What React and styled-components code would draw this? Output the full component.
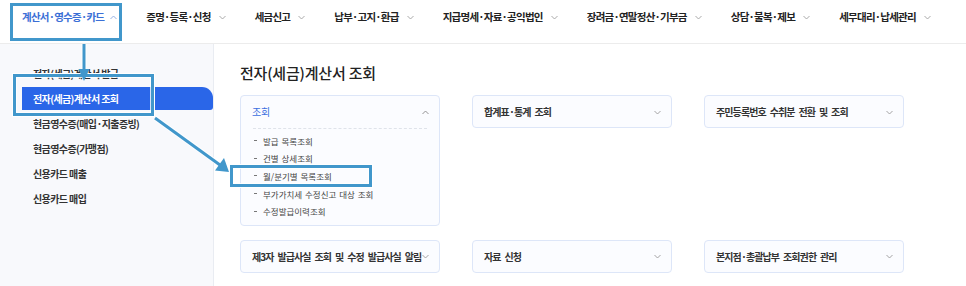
import React from 'react';
import styled, { createGlobalStyle } from 'styled-components';

const GlobalStyle = createGlobalStyle`
  html, body { margin: 0; padding: 0; background: #fff; }
  body {
    font-family: "Noto Sans CJK KR", "Noto Sans", sans-serif;
    color: #222;
  }
`;

const Page = styled.div`
  position: relative;
  width: 966px;
  height: 286px;
  overflow: hidden;
`;

const TopNav = styled.nav`
  display: flex;
  align-items: flex-start;
  box-sizing: border-box;
  height: 44px;
  padding: 10px 0 0 22px;
  gap: 29px;
  border-bottom: 1px solid #ececec;
`;

const NavItem = styled.div`
  display: flex;
  align-items: center;
  height: 14px;
  font-size: 10.5px;
  font-weight: 700;
  letter-spacing: -0.75px;
  line-height: 14px;
  white-space: nowrap;
  color: ${p => (p.$active ? '#3b6fd6' : '#222')};
`;

const Caret = styled.svg`
  flex-shrink: 0;
  margin-left: ${p => p.$gap ?? 8}px;
  margin-top: 1px;
`;

const Body = styled.div`
  display: flex;
  height: 242px;
`;

const Sidebar = styled.aside`
  width: 213px;
  flex-shrink: 0;
  background: #f8f9fc;
  border-right: 1px solid #e9ecf2;
  padding-top: 17px;
`;

const SideItem = styled.div`
  display: flex;
  align-items: center;
  box-sizing: border-box;
  height: ${p => (p.$active ? 23 : 25)}px;
  margin: ${p => (p.$active ? '1px 0 1px 22px' : '0')};
  padding-left: ${p => (p.$active ? 11 : 33)}px;
  font-size: 10px;
  font-weight: 700;
  letter-spacing: -0.6px;
  white-space: nowrap;
  color: ${p => (p.$active ? '#fff' : '#333')};
  background: ${p => (p.$active ? '#2a66e8' : 'transparent')};
  border-radius: ${p => (p.$active ? '0 11px 3px 0' : '0')};
`;

const Content = styled.main`
  flex: 1;
  padding: 19px 0 0 26px;
`;

const Title = styled.h1`
  margin: 0 0 12px;
  font-size: 15px;
  line-height: 20px;
  font-weight: 500;
  letter-spacing: -0.2px;
  color: #222;
`;

const CardGrid = styled.div`
  display: grid;
  grid-template-columns: repeat(3, 200px);
  column-gap: 32px;
  row-gap: 14px;
  align-items: start;
`;

const Card = styled.section`
  box-sizing: border-box;
  width: 200px;
  background: #fbfcff;
  border: 1px solid #dde6f8;
  border-radius: 4px;
`;

const CardHead = styled.div`
  display: flex;
  align-items: center;
  justify-content: space-between;
  height: 31px;
  padding: 0 10px 0 11px;
  font-size: 10px;
  font-weight: ${p => (p.$open ? 400 : 700)};
  letter-spacing: ${p => (p.$open ? '-0.3px' : '-0.9px')};
  word-spacing: ${p => (p.$open ? '0' : '2.5px')};
  white-space: nowrap;
  color: ${p => (p.$open ? '#3b6fe0' : '#333')};
`;

const Divider = styled.div`
  margin: 1px 12px 0 12px;
  border-top: 1px dashed #dfe3ea;
`;

const SubList = styled.ul`
  list-style: none;
  margin: 0;
  padding: 3px 0 5px 13px;
`;

const SubItem = styled.li`
  display: flex;
  align-items: center;
  height: 17.6px;
  font-size: 8.5px;
  word-spacing: 1px;
  color: #444;
  white-space: nowrap;

  &::before {
    content: '';
    width: 3px;
    height: 1px;
    margin-right: 6px;
    background: #777;
  }
`;

const Mark = styled.div`
  position: absolute;
  left: ${p => p.$x}px;
  top: ${p => p.$y}px;
  width: ${p => p.$w}px;
  height: ${p => p.$h}px;
  box-sizing: border-box;
  border: 3px solid #4197cb;
  box-shadow: 0 0 0 1px #fff, inset 0 0 0 1px rgba(255, 255, 255, 0.8);
  pointer-events: none;
`;

const Arrows = styled.svg`
  position: absolute;
  left: 0;
  top: 0;
  pointer-events: none;
`;

const Chevron = ({ up, color = '#9a9a9a', gap }) => (
  <Caret width="7" height="5" viewBox="0 0 7 5" $gap={gap}>
    <path
      d={up ? 'M0.5 4L3.5 1L6.5 4' : 'M0.5 1L3.5 4L6.5 1'}
      fill="none"
      stroke={color}
      strokeWidth="0.9"
    />
  </Caret>
);

const navs = [
  '계산서·영수증·카드',
  '증명·등록·신청',
  '세금신고',
  '납부·고지·환급',
  '지급명세·자료·공익법인',
  '장려금·연말정산·기부금',
  '상담·불복·제보',
  '세무대리·납세관리',
];

const sideItems = [
  '전자(세금)계산서 발급',
  '전자(세금)계산서 조회',
  '현금영수증(매입·지출증빙)',
  '현금영수증(가맹점)',
  '신용카드 매출',
  '신용카드 매입',
];

const subItems = [
  '발급 목록조회',
  '건별 상세조회',
  '월/분기별 목록조회',
  '부가가치세 수정신고 대상 조회',
  '수정발급이력조회',
];

export default function App() {
  return (
    <Page>
      <GlobalStyle />
      <TopNav>
        {navs.map((n, i) => (
          <NavItem key={n} $active={i === 0}>
            {n}
            <Chevron up={i === 0} color={i === 0 ? '#8aa8e0' : '#a0a0a0'} gap={i === 0 ? 6 : 8} />
          </NavItem>
        ))}
      </TopNav>

      <Body>
        <Sidebar>
          {sideItems.map((s, i) => (
            <SideItem key={s} $active={i === 1}>{s}</SideItem>
          ))}
        </Sidebar>

        <Content>
          <Title>전자(세금)계산서 조회</Title>
          <CardGrid>
            <Card>
              <CardHead $open>
                조회
                <Chevron up color="#888" />
              </CardHead>
              <Divider />
              <SubList>
                {subItems.map(s => <SubItem key={s}>{s}</SubItem>)}
              </SubList>
            </Card>
            <Card>
              <CardHead>합계표·통계 조회<Chevron /></CardHead>
            </Card>
            <Card>
              <CardHead>주민등록번호 수취분 전환 및 조회<Chevron /></CardHead>
            </Card>
            <Card>
              <CardHead>제3자 발급사실 조회 및 수정 발급사실 알림<Chevron gap={1} /></CardHead>
            </Card>
            <Card>
              <CardHead>자료 신청<Chevron /></CardHead>
            </Card>
            <Card>
              <CardHead>본지점·총괄납부 조회권한 관리<Chevron /></CardHead>
            </Card>
          </CardGrid>
        </Content>
      </Body>

      <Mark $x={10} $y={3} $w={112} $h={38} />
      <Mark $x={13} $y={74} $w={141} $h={42} />
      <Mark $x={230} $y={165} $w={142} $h={22} />

      <Arrows width="966" height="286" viewBox="0 0 966 286">
        <g stroke="#fff" strokeWidth="5" fill="#fff" strokeLinejoin="round">
          <line x1="84" y1="44" x2="84" y2="69" />
          <line x1="155" y1="118" x2="219" y2="164" />
        </g>
        <g fill="#4197cb" stroke="#4197cb">
          <line x1="84" y1="44" x2="84" y2="70" strokeWidth="3" />
          <polygon points="78.5,69 89.5,69 84,81" stroke="none" />
          <line x1="155" y1="118" x2="220" y2="165" strokeWidth="3" />
          <polygon points="215,170.5 224,158 229,172" stroke="none" />
        </g>
      </Arrows>
    </Page>
  );
}
